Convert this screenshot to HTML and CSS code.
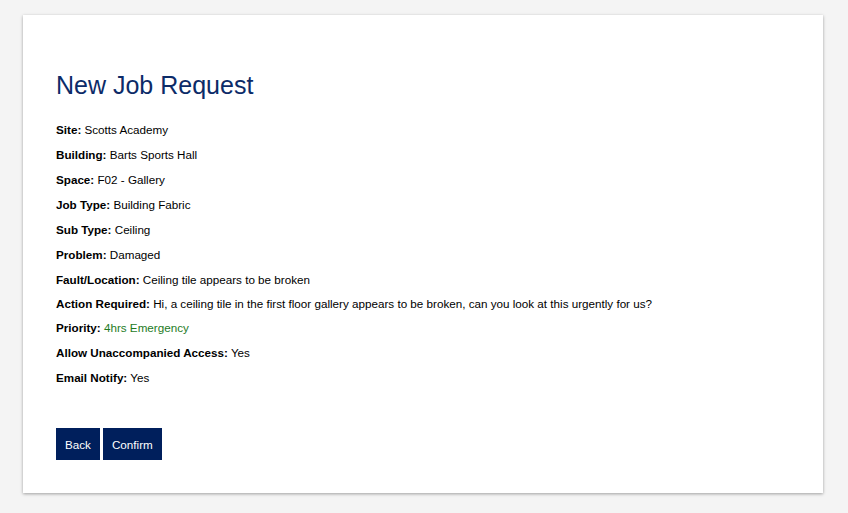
FILE: index.html
```html
<!DOCTYPE html>
<html>
<head>
<meta charset="utf-8">
<link rel="stylesheet" href="styles.css">
</head>
<body>
<div class="card">
  <h1 class="title">New Job Request</h1>
  <div class="details">
    <div class="row"><b>Site:</b> Scotts Academy</div>
    <div class="row"><b>Building:</b> Barts Sports Hall</div>
    <div class="row"><b>Space:</b> F02 - Gallery</div>
    <div class="row"><b>Job Type:</b> Building Fabric</div>
    <div class="row"><b>Sub Type:</b> Ceiling</div>
    <div class="row"><b>Problem:</b> Damaged</div>
    <div class="row"><b>Fault/Location:</b> Ceiling tile appears to be broken</div>
    <div class="row row-short"><b>Action Required:</b> Hi, a ceiling tile in the first floor gallery appears to be broken, can you look at this urgently for us?</div>
    <div class="row"><b>Priority:</b> <span class="priority">4hrs Emergency</span></div>
    <div class="row"><b>Allow Unaccompanied Access:</b> Yes</div>
    <div class="row"><b>Email Notify:</b> Yes</div>
  </div>
  <div class="actions">
    <button class="btn">Back</button>
    <button class="btn">Confirm</button>
  </div>
</div>
</body>
</html>
```

FILE: styles.css
```css
html, body {
  margin: 0;
  padding: 0;
  background: #f4f4f4;
}
body {
  padding: 15px 25px 20px 23px;
  font-family: "Liberation Sans", Arial, sans-serif;
  font-size: 11.66px;
  color: #000;
}
.card {
  width: 800px;
  height: 478px;
  box-sizing: border-box;
  background: #fff;
  padding: 0 33px;
  box-shadow: 0 1px 3px rgba(0,0,0,0.35);
  overflow: hidden;
}
.title {
  margin: 56px 0 18px 0;
  font-size: 25px;
  font-weight: normal;
  color: #0c2b68;
  line-height: 28px;
}
.row {
  line-height: 25px;
  height: 25px;
}
.row-short {
  height: 23px;
  line-height: 23px;
}
.row b {
  font-weight: bold;
}
.priority {
  color: #1e7b1e;
}
.actions {
  margin-top: 38px;
  display: flex;
  gap: 3px;
}
.btn {
  height: 32px;
  padding: 0 9px;
  border: none;
  background: #001f5c;
  color: #fff;
  font-family: "Liberation Sans", Arial, sans-serif;
  font-size: 11.66px;
  cursor: pointer;
}
```
